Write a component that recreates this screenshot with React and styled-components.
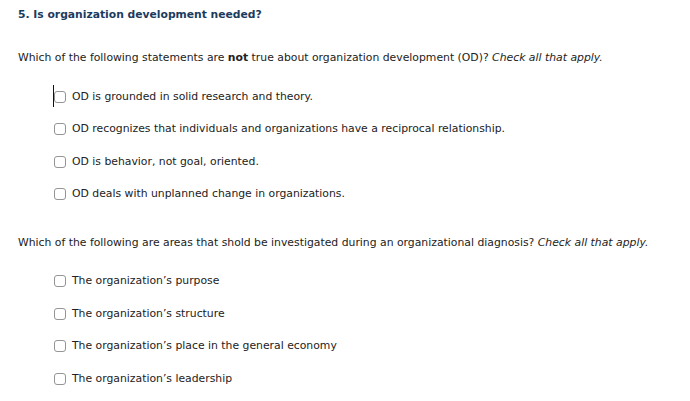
import React from "react";
import styled, { createGlobalStyle } from "styled-components";

const Global = createGlobalStyle`
  html, body { margin: 0; padding: 0; background: #fff; }
  body { font-family: "DejaVu Sans", Verdana, sans-serif; color: #222; }
`;

const Page = styled.div`
  padding: 8px 18px 0 18px;
`;

const Title = styled.h2`
  margin: 0;
  font-size: 10.75px;
  font-weight: bold;
  line-height: 14px;
  color: #1b3b5e;
`;

const Section = styled.div`
  margin-top: ${(p) => p.$top}px;
`;

const Prompt = styled.p`
  margin: 0;
  font-size: 10.83px;
  line-height: 14px;
  color: #222;
  strong { font-weight: bold; }
  em { font-style: italic; }
`;

const Options = styled.ul`
  list-style: none;
  margin: ${(p) => p.$top}px 0 0 0;
  padding: 0 0 0 36px;
  display: flex;
  flex-direction: column;
  gap: 18.5px;
`;

const Option = styled.li`
  position: relative;
  display: flex;
  align-items: center;
  gap: 6px;
  font-size: 10.83px;
  line-height: 14px;
  color: #222;
`;

const Box = styled.span`
  width: 12px;
  height: 12px;
  border: 1px solid #959595;
  border-radius: 3px;
  box-sizing: border-box;
  flex: none;
  background: #fff;
`;

const Caret = styled.span`
  position: absolute;
  left: -1px;
  top: -5px;
  width: 1px;
  height: 22px;
  background: #111;
`;

const q1 = [
  "OD is grounded in solid research and theory.",
  "OD recognizes that individuals and organizations have a reciprocal relationship.",
  "OD is behavior, not goal, oriented.",
  "OD deals with unplanned change in organizations.",
];

const q2 = [
  "The organization\u2019s purpose",
  "The organization\u2019s structure",
  "The organization\u2019s place in the general economy",
  "The organization\u2019s leadership",
];

export default function App() {
  return (
    <Page>
      <Global />
      <Title>5. Is organization development needed?</Title>
      <Section $top={29}>
        <Prompt>
          Which of the following statements are <strong>not</strong> true about organization development (OD)? <em>Check all that apply.</em>
        </Prompt>
        <Options $top={24.5}>
          {q1.map((t, i) => (
            <Option key={t}>
              {i === 0 && <Caret />}
              <Box />
              {t}
            </Option>
          ))}
        </Options>
      </Section>
      <Section $top={34.5}>
        <Prompt>
          Which of the following are areas that shold be investigated during an organizational diagnosis? <em>Check all that apply.</em>
        </Prompt>
        <Options $top={24.5}>
          {q2.map((t) => (
            <Option key={t}>
              <Box />
              {t}
            </Option>
          ))}
        </Options>
      </Section>
    </Page>
  );
}
